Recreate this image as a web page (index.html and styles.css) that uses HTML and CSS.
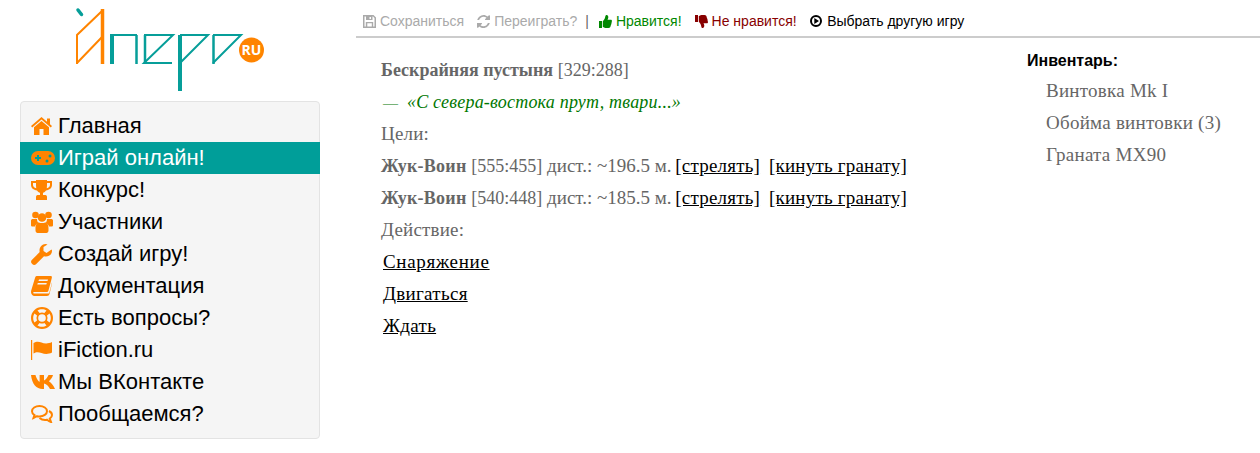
FILE: index.html
```html
<!DOCTYPE html>
<html lang="ru">
<head>
<meta charset="utf-8">
<title>Апперо</title>
<link rel="stylesheet" href="styles.css">
</head>
<body>
<div class="page">
  <aside class="side">
    <a class="logo" href="#">
      <svg width="200" height="92" viewBox="0 0 200 92">
        <g fill="none" stroke="#ff8400">
          <path stroke-width="2" d="M13 64V35L38 11M13 63 39 36"/>
          <path stroke-width="3.500" d="M38.500 9V64"/>
        </g>
        <g fill="none" stroke="#069e99">
          <path stroke-width="3.500" stroke-linecap="round" d="M14 10 17.500 14.500"/>
          <path stroke-width="2" d="M46 35H73"/>
          <path stroke-width="4" d="M48 35V64"/>
          <path stroke-width="2.500" d="M72.500 35V64"/>
          <path stroke-width="2" d="M80 35H109L80 63H108"/>
          <path stroke-width="2.500" d="M81 35V64"/>
          <path stroke-width="2" d="M116 35H144L116 63"/>
          <path stroke-width="4" d="M116 35V91"/>
          <path stroke-width="2" d="M149 35H177L149 63"/>
          <path stroke-width="2.500" d="M149.500 35V64"/>
        </g>
        <circle cx="187.500" cy="50" r="12.500" fill="#ff8400"/>
        <text class="logo-ru" x="187.500" y="55" text-anchor="middle">RU</text>
      </svg>
    </a>
    <nav class="menu">
      <a class="item" href="#"><span class="ic"><svg width="21" height="18" viewBox="0 0 21 18"><path d="M10.500 0 16 4.700V1.500H19V7.300L21 9 19.800 10.400 10.500 2.600 1.200 10.400 0 9ZM10.500 4 18 10.200V18H12.500V12H8.500V18H3V10.200Z"/></svg></span>Главная</a>
      <a class="item active" href="#"><span class="ic"><svg width="24" height="14" viewBox="0 0 24 14"><path fill-rule="evenodd" d="M7 0H17A7 7 0 0 1 17 14H7A7 7 0 0 1 7 0ZM6 4V6H4V8H6V10H8V8H10V6H8V4ZM16 8.500A1.500 1.500 0 1 0 16 11.500 1.500 1.500 0 0 0 16 8.500ZM19 3.500A1.500 1.500 0 1 0 19 6.500 1.500 1.500 0 0 0 19 3.500Z"/></svg></span>Играй онлайн!</a>
      <a class="item" href="#"><span class="ic"><svg width="21" height="20" viewBox="0 0 21 20"><path d="M5 0H16V1H21V5C21 8 18.500 10 15 10.500 14 12 12.500 12.500 12 13V15H14.500C15.500 15 16 16 16 17V20H5V17C5 16 5.500 15 6.500 15H9V13C8.500 12.500 7 12 6 10.500 2.500 10 0 8 0 5V1H5ZM2 3V5C2 6.500 3.200 7.700 5.200 8.200 5 6.500 5 4.800 5 3ZM19 3H16C16 4.800 16 6.500 15.800 8.200 17.800 7.700 19 6.500 19 5Z" fill-rule="evenodd"/></svg></span>Конкурс!</a>
      <a class="item" href="#"><span class="ic"><svg width="22" height="22" viewBox="0 0 22 22"><circle cx="4.500" cy="4" r="3.300"/><circle cx="17.500" cy="4" r="3.300"/><circle cx="11" cy="6.500" r="4.300"/><path d="M0 9.500C0 8.500 1 8 2 8H6C6 10 6.800 11.500 7.500 12 5.500 12.500 4.200 14 4 15.500H1C0 15.500 0 14.500 0 13.500ZM22 9.500C22 8.500 21 8 20 8H16C16 10 15.200 11.500 14.500 12 16.500 12.500 17.800 14 18 15.500H21C22 15.500 22 14.500 22 13.500Z"/><path d="M8 11.500C9 12.300 13 12.300 14 11.500 16.500 11.500 17.500 14 17.500 17V19.500C17.500 21 16.500 22 15.500 22H6.500C5.500 22 4.500 21 4.500 19.500V17C4.500 14 5.500 11.500 8 11.500Z"/></svg></span>Участники</a>
      <a class="item" href="#"><span class="ic"><svg width="21" height="21" viewBox="0 0 21 21"><path d="M14.500 0C15.500 0 16 .2 16.500 .5L12.500 3V7L15.500 9 20.500 5.500C21 6 21 6.500 21 7 21 10 18.500 12.500 15 12.500 14.300 12.500 13.700 12.400 13 12.200L5 20.200C4 21.200 2.500 21.300 1.500 20.300L.8 19.600C-.2 18.600-.2 17 .8 16L8.700 8.100C8.500 7.500 8.500 7 8.500 6.500 8.500 3 11 0 14.500 0Z"/></svg></span>Создай игру!</a>
      <a class="item" href="#"><span class="ic"><svg width="21" height="20" viewBox="0 0 21 20"><path fill-rule="evenodd" d="M5.500 0H20C21 0 21 1 20.800 2L17.500 14.500C17.200 15.500 16.500 16 15.500 16H3C2 16 1.800 17.500 3 17.500H17C18 17.500 18.200 17 18.500 16L21 6.500 21 7.500 18.500 18C18.200 19.300 17.300 20 16 20H3.500C1.500 20 0 18 0 16 0 15 .2 14.500 .5 13.500L4 2C4.300 .8 5 0 5.500 0ZM8 3.500 7.500 5H16.500L17 3.500ZM6.800 7 6.300 8.500H15.300L15.800 7Z"/></svg></span>Документация</a>
      <a class="item" href="#"><span class="ic"><svg width="22" height="22" viewBox="0 0 22 22"><path fill-rule="evenodd" d="M11 0A11 11 0 1 1 11 22 11 11 0 0 1 11 0ZM11 2.200C9.300 2.200 7.800 2.700 6.500 3.500L8.600 6A6 6 0 0 1 13.400 6L15.500 3.500C14.200 2.700 12.700 2.200 11 2.200ZM11 7.200A3.800 3.800 0 1 0 11 14.800 3.800 3.800 0 0 0 11 7.200ZM3.500 6.500C2.700 7.800 2.200 9.300 2.200 11S2.700 14.200 3.500 15.500L6 13.400A6 6 0 0 1 6 8.600ZM18.500 6.500 16 8.600A6 6 0 0 1 16 13.400L18.500 15.500C19.300 14.200 19.800 12.700 19.800 11S19.300 7.800 18.500 6.500ZM8.600 16 6.500 18.500C7.800 19.300 9.300 19.800 11 19.800S14.200 19.300 15.500 18.500L13.400 16A6 6 0 0 1 8.600 16Z"/></svg></span>Есть вопросы?</a>
      <a class="item" href="#"><span class="ic"><svg width="21" height="20" viewBox="0 0 21 20"><path d="M0 0H1.200V20H0ZM2.500 3C5.500 1 8 1.500 10.500 2.500S17 4 21 2V12.500C17 14.500 13.500 14 10.500 13S5.500 11.500 2.500 13.500Z"/></svg></span>iFiction.ru</a>
      <a class="item" href="#"><span class="ic"><svg width="24" height="14" viewBox="0 0 24 14"><path d="M0 0H4.500C5 2.500 7 6 8.600 6.800V0H13V5.500C14.500 5 16.500 2.500 17.500 0H22C21.500 2.500 19 5.300 17.800 6.300 19.500 7.300 22.500 10 24 14H19C18 11.500 15.500 9 13 8.500V14H11.500C5.500 14 1 9 0 0Z"/></svg></span>Мы ВКонтакте</a>
      <a class="item" href="#"><span class="ic"><svg class="comments" width="22" height="18" viewBox="0 0 22 18"><path d="M8.500 1C4.300 1 1 3.300 1 6.200 1 7.800 2 9.200 3.500 10.200L2.500 13C3.800 12.500 5 11.800 6 11.200 6.800 11.400 7.600 11.500 8.500 11.500 12.700 11.500 16 9.100 16 6.200S12.700 1 8.500 1Z"/><path d="M18 6C20 7 21 8.300 21 10 21 11.500 20 12.800 18.800 13.600L20 17C18.500 16.500 17 15.500 16 14.700 15.300 14.900 14.700 15 14 15 11.800 15 10 14.300 8.500 13"/></svg></span>Пообщаемся?</a>
    </nav>
  </aside>
  <main class="main">
    <header class="bar">
      <a class="act muted" href="#"><svg width="13" height="13" viewBox="0 0 13 13"><path fill-rule="evenodd" d="M0 0H10.500L13 2.500V13H0ZM1.500 1.500V11.500H2.800V7H10.200V11.500H11.500V3L10 1.500H9.500V5H3V1.500ZM4.300 8.300V11.500H8.800V8.300ZM6.500 2V4H8V2Z"/></svg>Сохраниться</a>
      <a class="act muted" href="#"><svg width="13" height="13" viewBox="0 0 13 13"><path d="M6.500 0C8 0 9.400 .6 10.500 1.600L12 .2C12.500 0 13 .3 13 .7V5H8.700C8 5 7.800 4.500 8.200 4L9.500 2.700C8.700 2 7.700 1.700 6.500 1.700 4.500 1.700 2.800 3 2.100 5H.2C1 2.200 3.500 0 6.500 0ZM6.500 13C5 13 3.600 12.400 2.500 11.400L1 12.800C.5 13 0 12.700 0 12.300V8H4.300C5 8 5.200 8.500 4.800 9L3.500 10.300C4.300 11 5.300 11.300 6.500 11.300 8.500 11.300 10.200 10 10.900 8H12.800C12 10.800 9.500 13 6.500 13Z"/></svg>Переиграть?</a>
      <span class="sep">|</span>
      <a class="act up" href="#"><svg width="13" height="13" viewBox="0 0 13 13"><path d="M0 6H3V13H0ZM3.800 6.200C5 5 6 3.500 6.300 1.500 6.400 .5 7 0 7.700 0 8.800 0 9.300 1 9.300 2.200 9.300 3.300 8.800 4 8.500 4.700H11.800C12.500 4.700 13 5.300 13 6 13 6.500 12.800 6.800 12.600 7.100 12.800 7.800 12.700 8.500 12.200 9 12.300 9.700 12.100 10.300 11.600 10.800 11.700 12 11 13 9.500 13H7.500C6 13 5 12.500 3.800 12Z"/></svg>Нравится!</a>
      <a class="act down" href="#"><svg width="13" height="13" viewBox="0 0 13 13"><path d="M0 0H3V7H0ZM3.800 6.800C5 8 6 9.500 6.300 11.500 6.400 12.500 7 13 7.700 13 8.800 13 9.300 12 9.300 10.800 9.300 9.700 8.800 9 8.500 8.300H11.800C12.500 8.300 13 7.700 13 7 13 6.500 12.800 6.200 12.600 5.900 12.800 5.200 12.700 4.500 12.200 4 12.300 3.300 12.100 2.700 11.600 2.200 11.700 1 11 0 9.500 0H7.500C6 0 5 .5 3.800 1Z"/></svg>Не нравится!</a>
      <a class="act pick" href="#"><svg width="12" height="12" viewBox="0 0 12 12"><path fill-rule="evenodd" d="M6 0A6 6 0 1 1 6 12 6 6 0 0 1 6 0ZM6 2A4 4 0 1 0 6 10 4 4 0 0 0 6 2ZM4.300 3 9 6 4.300 9Z"/></svg>Выбрать другую игру</a>
    </header>
    <div class="content">
      <section class="story">
        <p class="line"><b class="title">Бескрайняя пустыня</b> <span class="coord">[329:288]</span></p>
        <p class="line speech"><span class="dash">—</span><i>«С севера-востока прут, твари...»</i></p>
        <p class="line label">Цели:</p>
        <p class="line"><b>Жук-Воин</b> <span class="coord">[555:455]</span> дист.: ~196.5 м. <span class="links"><a href="#">[стрелять]</a><a href="#">[кинуть гранату]</a></span></p>
        <p class="line"><b>Жук-Воин</b> <span class="coord">[540:448]</span> дист.: ~185.5 м. <span class="links"><a href="#">[стрелять]</a><a href="#">[кинуть гранату]</a></span></p>
        <p class="line label">Действие:</p>
        <p class="line action"><a class="wide" href="#">Снаряжение</a></p>
        <p class="line action"><a href="#">Двигаться</a></p>
        <p class="line action"><a href="#">Ждать</a></p>
      </section>
      <section class="inv">
        <h2 class="inv-title">Инвентарь:</h2>
        <ul class="inv-list">
          <li>Винтовка Mk I</li>
          <li>Обойма винтовки (3)</li>
          <li>Граната MX90</li>
        </ul>
      </section>
    </div>
  </main>
</div>
</body>
</html>
```

FILE: styles.css
```css
* { box-sizing: border-box; }
html, body { margin: 0; padding: 0; background: #fff; }
body { font-family: "Liberation Sans", Arial, sans-serif; }
a { color: inherit; text-decoration: none; }
p { margin: 0; }

.page { display: flex; height: 453px; overflow: hidden; }

.side { width: 356px; flex: none; padding: 0 36px 0 20px; }
.logo { display: block; height: 101px; padding-left: 44px; }
.logo svg { display: block; }
.logo-ru { font: bold 14px "Open Sans", "Liberation Sans", sans-serif; fill: #fff; }

.menu {
  background: #f5f5f5;
  border: 1px solid #e3e3e3;
  border-radius: 4px;
  padding: 8px 0 9px;
  height: 338px;
}
.item {
  display: flex;
  align-items: center;
  height: 32px;
  padding-left: 10px;
  font-size: 22px;
  color: #000;
}
.item.active { background: #009e99; color: #fff; margin: 0 -1px; padding-left: 11px; }
.ic { width: 27px; flex: none; display: flex; align-items: center; }
.ic svg { fill: #ff8400; display: block; }
.ic .comments { fill: none; stroke: #ff8400; stroke-width: 2; }

.main { flex: 1; min-width: 0; }
.bar {
  display: flex;
  align-items: center;
  height: 38px;
  padding: 6px 0 0 7px;
  border-bottom: 2px solid #ccc;
  font-size: 14px;
}
.act { display: flex; align-items: center; gap: 4px; margin-right: 13px; white-space: nowrap; }
.act svg { fill: currentColor; flex: none; }
.muted { color: #aaa; }
.sep { color: #666; margin: 0 10px 0 -5px; }
.up { color: #080; }
.down { color: #800; margin-right: 13.500px; }
.pick { color: #000; margin-right: 0; gap: 5px; }

.content { display: flex; padding: 16px 0 0 25px; }
.story { width: 646px; flex: none; color: #666; font: 19px/32px "Liberation Serif", serif; }
.line { height: 32px; white-space: nowrap; }
.line b { font-size: 18px; letter-spacing: .25px; }
.line .title { letter-spacing: 0; }
.coord { font-size: 18px; }
.label { letter-spacing: .2px; }
.speech { color: #070; }
.speech i { font-size: 18px; letter-spacing: .2px; }
.dash { display: inline-block; width: 26px; padding-left: 2px; font-size: 15px; }
.links { margin-left: -1px; letter-spacing: .2px; }
.links a { color: #000; text-decoration: underline; margin-right: 9px; }
.action { padding-left: 2px; letter-spacing: .3px; }
.action a { color: #000; text-decoration: underline; }
.action .wide { letter-spacing: .7px; }

.inv-title { margin: 0; font-size: 16px; line-height: 16px; font-weight: bold; color: #000; transform: translateY(-1px); }
.inv-list {
  list-style: none;
  margin: 5px 0 0;
  padding: 0 0 0 19px;
  font: 19px/32px "Liberation Serif", serif;
  letter-spacing: .25px;
  color: #666;
}
```
